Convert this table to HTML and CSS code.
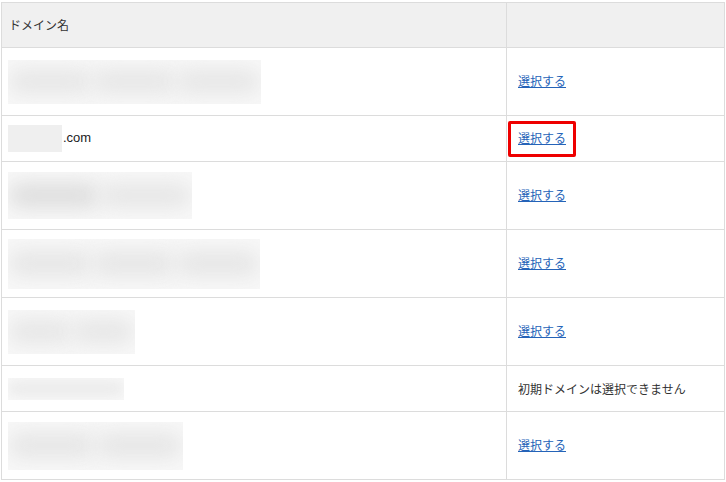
FILE: index.html
```html
<!DOCTYPE html>
<html lang="ja">
<head>
<meta charset="utf-8">
<link rel="stylesheet" href="styles.css">
</head>
<body>
<div class="wrap">
<table class="domains">
  <colgroup><col class="c-name"><col class="c-act"></colgroup>
  <thead>
    <tr class="head"><th>ドメイン名</th><th></th></tr>
  </thead>
  <tbody>
    <tr class="tall"><td><span class="blur b1"><i class="blob"></i><i class="blob"></i><i class="blob"></i></span></td><td><a href="#">選択する</a></td></tr>
    <tr class="short"><td><span class="blur b2"></span>.com</td><td><span class="hl"><a href="#">選択する</a></span></td></tr>
    <tr class="tall"><td><span class="blur b3"><i class="blob"></i><i class="blob"></i></span></td><td><a href="#">選択する</a></td></tr>
    <tr class="tall"><td><span class="blur b4"><i class="blob"></i><i class="blob"></i><i class="blob"></i></span></td><td><a href="#">選択する</a></td></tr>
    <tr class="tall"><td><span class="blur b5"><i class="blob"></i><i class="blob"></i></span></td><td><a href="#">選択する</a></td></tr>
    <tr class="short"><td><span class="blur b6"><i class="blob"></i></span></td><td class="note">初期ドメインは選択できません</td></tr>
    <tr class="tall"><td><span class="blur b7"><i class="blob"></i><i class="blob"></i></span></td><td><a href="#">選択する</a></td></tr>
  </tbody>
</table>
</div>
</body>
</html>
```
FILE: styles.css
```css
html, body { margin: 0; padding: 0; background: #fff; }
body {
  font-family: "Noto Sans CJK JP", "Liberation Sans", sans-serif;
  font-size: 12px;
  color: #333;
}
.wrap { padding: 2px 2px 0 1px; }
.domains {
  border-collapse: collapse;
  width: 723px;
  table-layout: fixed;
}
.c-name { width: 505px; }
.c-act { width: 218px; }
.domains th, .domains td {
  border: 1px solid #dcdcdc;
  text-align: left;
  vertical-align: middle;
  padding: 0 0 0 6px;
  font-weight: normal;
  line-height: 16px;
}
.domains th { padding-left: 7px; }
.domains td + td, .domains th + th { padding-left: 11px; }
.head th { background: #f0f0f0; height: 44px; color: #333; }
.tall td { height: 67px; }
.short td { height: 45px; }
.domains td { font-family: "Liberation Sans", "Noto Sans CJK JP", sans-serif; font-size: 13px; color: #222; }
.domains td.note, .domains a { font-family: "Noto Sans CJK JP", sans-serif; font-size: 12px; }
.domains td.note { color: #333; }
a { color: #2563b8; text-decoration: underline; }
.hl {
  display: inline-block;
  border: 3px solid #ee0000;
  border-radius: 2px;
  padding: 6px 7px 7px 7px;
  margin: 0 0 0 -10px;
}
.blur {
  display: inline-flex;
  vertical-align: middle;
  background: #f8f8f8;
  position: relative;
  overflow: hidden;
  gap: 0;
  align-items: center;
  padding: 0;
  box-sizing: border-box;
}
.blob {
  display: block;
  height: 55%;
  flex: 1;
  background: #e6e6e6;
  border-radius: 20px;
  filter: blur(10px);
}
.b1 { width: 253px; height: 44px; }
.b2 { width: 54px; height: 27px; background: #efefef; margin-right: 1px; }
.b3 { width: 184px; height: 47px; }
.b4 { width: 252px; height: 50px; }
.b5 { width: 127px; height: 44px; }
.b6 { width: 116px; height: 22px; }
.b7 { width: 175px; height: 48px; }
.b3 .blob:first-child { background: #dddddd; }
.b6 .blob { background: #ebebeb; filter: blur(6px); height: 70%; }
```
